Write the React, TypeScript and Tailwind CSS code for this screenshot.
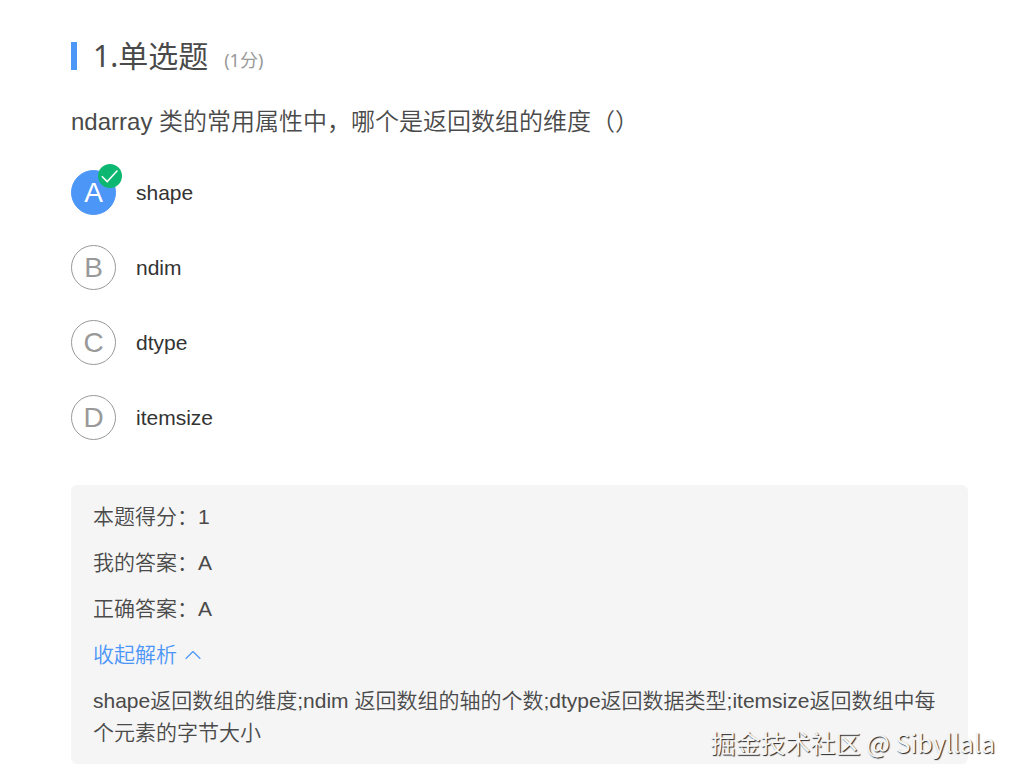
import { ChevronUp } from "lucide-react";
import { useState } from "react";

interface Option {
  key: string;
  label: string;
}

const CORRECT_KEY = "A";

const options: Option[] = [
  { key: "A", label: "shape" },
  { key: "B", label: "ndim" },
  { key: "C", label: "dtype" },
  { key: "D", label: "itemsize" },
];

function CorrectBadge() {
  return (
    <svg
      className="absolute -top-[7px] -right-[7px] h-6 w-6"
      viewBox="0 0 24 24"
      fill="none"
      aria-hidden="true"
    >
      <circle cx="12" cy="12" r="12" fill="#0cb871" />
      <path d="M3.8 12.2L9.2 17.6L19.4 6.4" stroke="#fff" strokeWidth="1.5" />
    </svg>
  );
}

interface OptionRowProps {
  option: Option;
  checked: boolean;
  onSelect: (key: string) => void;
}

function OptionRow({ option, checked, onSelect }: OptionRowProps) {
  return (
    <label className="relative flex w-fit cursor-pointer items-center gap-5">
      <input
        type="radio"
        name="answer"
        value={option.key}
        checked={checked}
        onChange={() => onSelect(option.key)}
        className="peer sr-only"
      />
      <span className="relative flex h-[45px] w-[45px] items-center justify-center rounded-full border border-[#999] text-[28px] leading-8 text-[#999] peer-checked:border-[#4c96f7] peer-checked:bg-[#4c96f7] peer-checked:text-white">
        {option.key}
        {checked && option.key === CORRECT_KEY && <CorrectBadge />}
      </span>
      <span className="text-[21px] leading-8 text-[#333]">{option.label}</span>
    </label>
  );
}

export default function App() {
  const [selected, setSelected] = useState("A");
  const [expanded, setExpanded] = useState(true);

  return (
    <div className="relative bg-white pt-9 pr-[50px] pb-4 pl-[71px] font-['Liberation_Sans','Noto_Sans_CJK_SC',sans-serif] font-[350] text-[#4a4a4a]">
      <header className="flex items-center font-['Noto_Sans','Noto_Sans_CJK_SC',sans-serif] font-normal">
        <span className="h-7 w-[6px] bg-[#4c96f7]" />
        <h1 className="ml-4 text-[30px] leading-10 font-normal">1.单选题</h1>
        <span className="mt-2 ml-4 text-lg leading-8 text-[#999]">(1分)</span>
      </header>

      <form className="pt-7">
        <fieldset>
          <legend className="text-2xl leading-9">
            ndarray 类的常用属性中，哪个是返回数组的维度（）
          </legend>
          <div className="mt-[30px] flex flex-col gap-[30px]">
            {options.map((option) => (
              <OptionRow
                key={option.key}
                option={option}
                checked={selected === option.key}
                onSelect={setSelected}
              />
            ))}
          </div>
        </fieldset>
      </form>

      <section className="mt-[45px] flex flex-col items-start gap-[14px] rounded-md bg-[#f5f5f5] px-[22px] pt-4 pb-[15px] text-[21px] leading-8">
        <p>本题得分：1</p>
        <p>我的答案：A</p>
        <p>正确答案：A</p>
        <button
          type="button"
          aria-expanded={expanded}
          onClick={() => setExpanded(!expanded)}
          className="flex cursor-pointer items-center gap-0.5 text-[#4c96f7]"
        >
          收起解析
          <ChevronUp
            className={expanded ? "h-7 w-7" : "h-7 w-7 rotate-180"}
            strokeWidth={1}
          />
        </button>
        {expanded && (
          <p>
            shape返回数组的维度;ndim
            返回数组的轴的个数;dtype返回数据类型;itemsize返回数组中每个元素的字节大小
          </p>
        )}
      </section>

      <p className="absolute right-[23px] bottom-5 font-['Noto_Sans_CJK_SC',sans-serif] text-[25px] leading-9 font-normal text-[#f5f5f5] [text-shadow:1px_1px_1px_#222]">
        掘金技术社区 @ Sibyllala
      </p>
    </div>
  );
}
